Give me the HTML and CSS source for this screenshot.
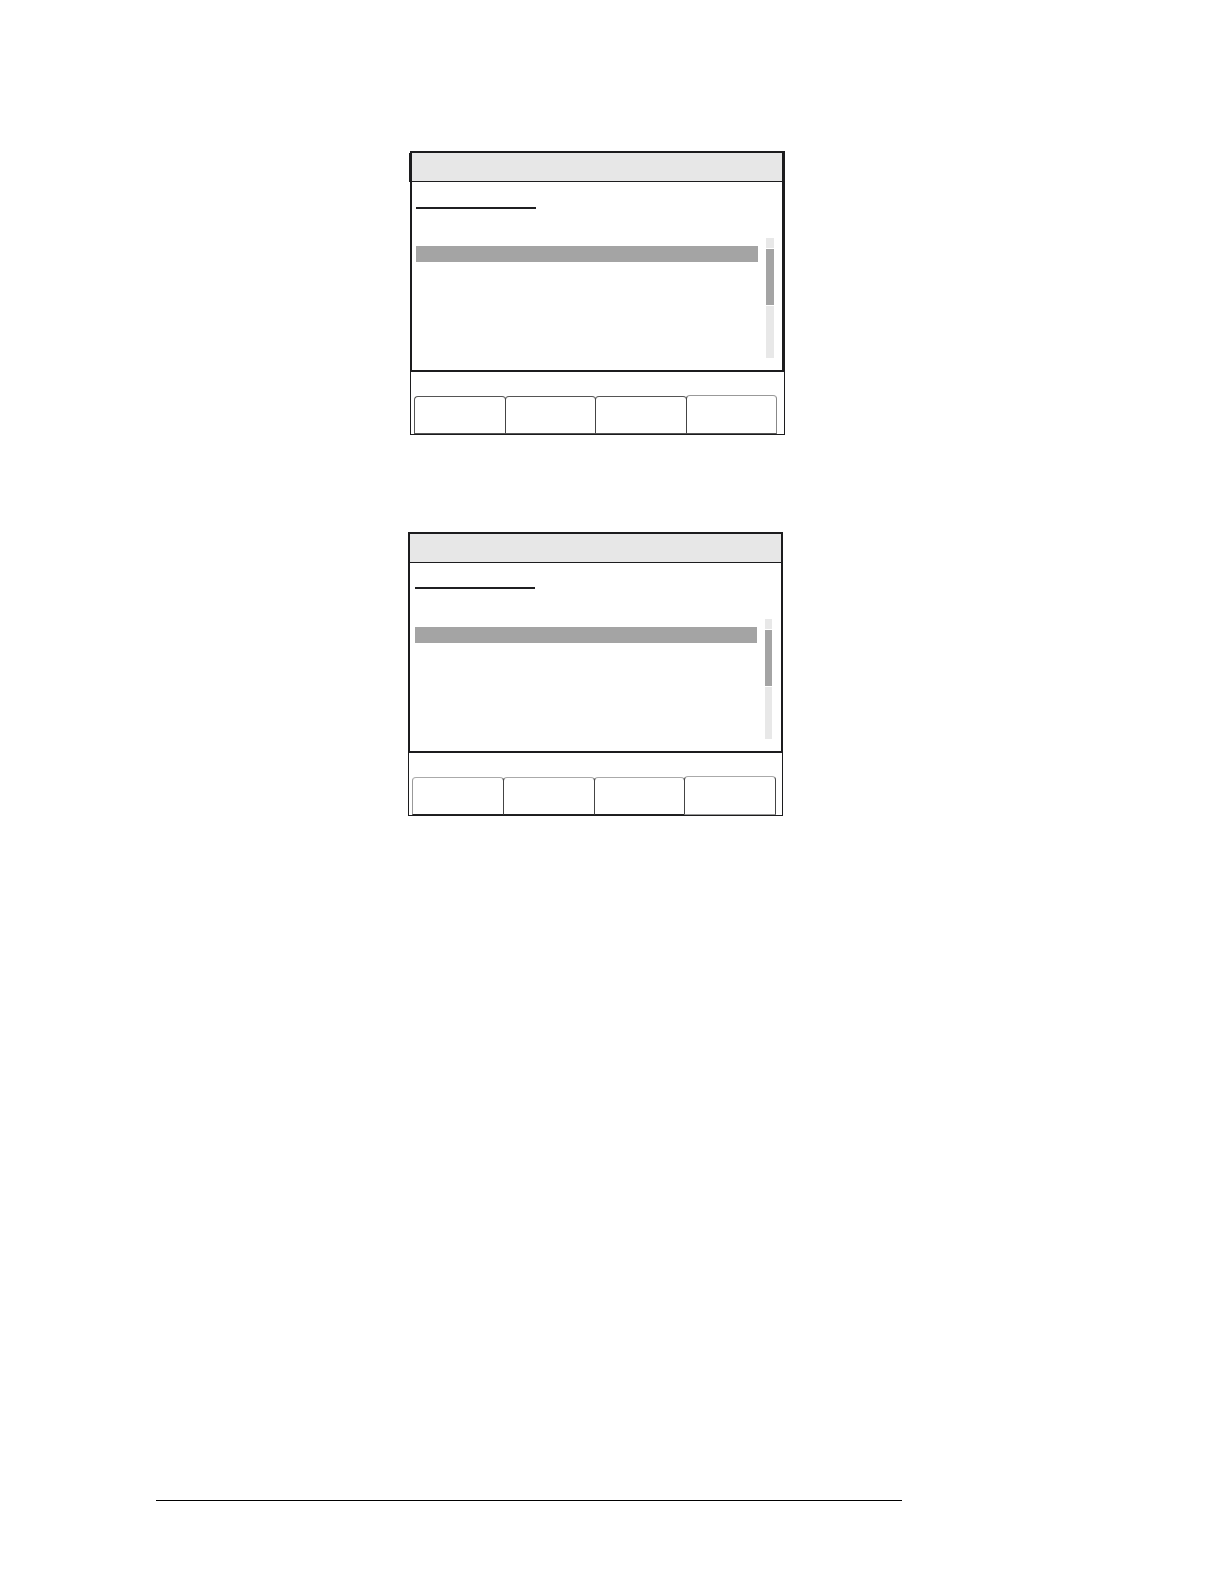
FILE: index.html
```html
<!DOCTYPE html>
<html lang="en">
<head>
<meta charset="utf-8">
<meta name="viewport" content="width=device-width, initial-scale=1">
<title>Screens</title>
<link rel="stylesheet" href="styles.css">
</head>
<body>
<main class="screens">
  <section class="screen screen-first">
    <div class="display">
      <header class="title-bar"></header>
      <div class="content">
        <div class="list">
          <div class="heading"></div>
          <div class="selected-row"></div>
        </div>
        <div class="scrollbar"><div class="thumb"></div></div>
      </div>
    </div>
    <div class="soft-keys">
      <button type="button" class="key" aria-label="Key 1"></button>
      <button type="button" class="key" aria-label="Key 2"></button>
      <button type="button" class="key" aria-label="Key 3"></button>
      <button type="button" class="key key-last" aria-label="Key 4"></button>
    </div>
  </section>
  <section class="screen screen-second">
    <div class="display">
      <header class="title-bar"></header>
      <div class="content">
        <div class="list">
          <div class="heading"></div>
          <div class="selected-row"></div>
        </div>
        <div class="scrollbar"><div class="thumb"></div></div>
      </div>
    </div>
    <div class="soft-keys">
      <button type="button" class="key" aria-label="Key 1"></button>
      <button type="button" class="key" aria-label="Key 2"></button>
      <button type="button" class="key" aria-label="Key 3"></button>
      <button type="button" class="key key-last" aria-label="Key 4"></button>
    </div>
  </section>
</main>
<footer class="page-footer"></footer>
</body>
</html>
```

FILE: styles.css
```css
* {
  box-sizing: border-box;
}

body {
  display: flex;
  flex-direction: column;
  justify-content: space-between;
  min-height: 100vh;
  margin: 0;
  padding: 151px 0 83px 156px;
  background: #fff;
  font-family: "Liberation Sans", sans-serif;
}

.screens {
  display: flex;
  flex-direction: column;
  gap: 97px;
  padding-left: 252px;
}

.screen {
  width: 100%;
  max-width: 375px;
}

.screen-first {
  margin-left: 2px;
}

.display {
  border: 2px solid #1c1c1e;
}

.screen-first .display {
  border-right-width: 3px;
}

.title-bar {
  height: 29px;
  background: #e7e7e7;
  border-bottom: 1px solid #1c1c1e;
}

/* The first title bar's frame is one pixel heavier on the left. */
.screen-first .title-bar {
  box-shadow: -3px 0 #1c1c1e;
}

.content {
  display: flex;
  gap: 8px;
  min-height: 188px;
  padding: 24px 9px 12px 5px;
}

.screen-first .content {
  padding: 25px 8px 12px 4px;
}

.list {
  display: flex;
  flex: 1;
  flex-direction: column;
  gap: 38px;
}

.screen-first .list {
  gap: 37px;
}

.heading {
  width: 35%;
  height: 2px;
  background: #1f1f21;
}

.selected-row {
  height: 16px;
  background: #a4a4a4;
}

.scrollbar {
  width: 7px;
  margin-top: 32px;
  padding-top: 10px;
  background: #e8e8e8;
}

.screen-first .scrollbar {
  width: 8px;
  margin-top: 31px;
}

.thumb {
  height: 58px;
  background: #a4a4a4;
  border: solid #fff;
  border-width: 1px 0;
}

.soft-keys {
  display: flex;
  padding: 24px 6px 0 3px;
  border: 1px solid #1c1c1e;
  border-top: 0;
}

.screen-first .soft-keys {
  padding-right: 7px;
}

.key {
  flex: 1;
  height: 38px;
  padding: 0;
  background: #fff;
  border: 1px solid #444;
  border-top-color: #aaa;
  border-bottom-color: #222;
  border-radius: 4px 4px 0 0;
}

.key + .key {
  margin-left: -1px;
}

.key:first-child {
  border-left-color: #999;
}

.key-last {
  height: 39px;
  margin-top: -1px;
  border-bottom-color: #999;
}

.screen-first .key {
  border-top-color: #555;
  border-bottom-color: #555;
}

.screen-first .key:first-child {
  border-left-color: #555;
}

.screen-first .key-last {
  border-top-color: #999;
  border-right-color: #888;
}

.page-footer {
  width: 100%;
  max-width: 746px;
  border-top: 1px solid #000;
}
```
